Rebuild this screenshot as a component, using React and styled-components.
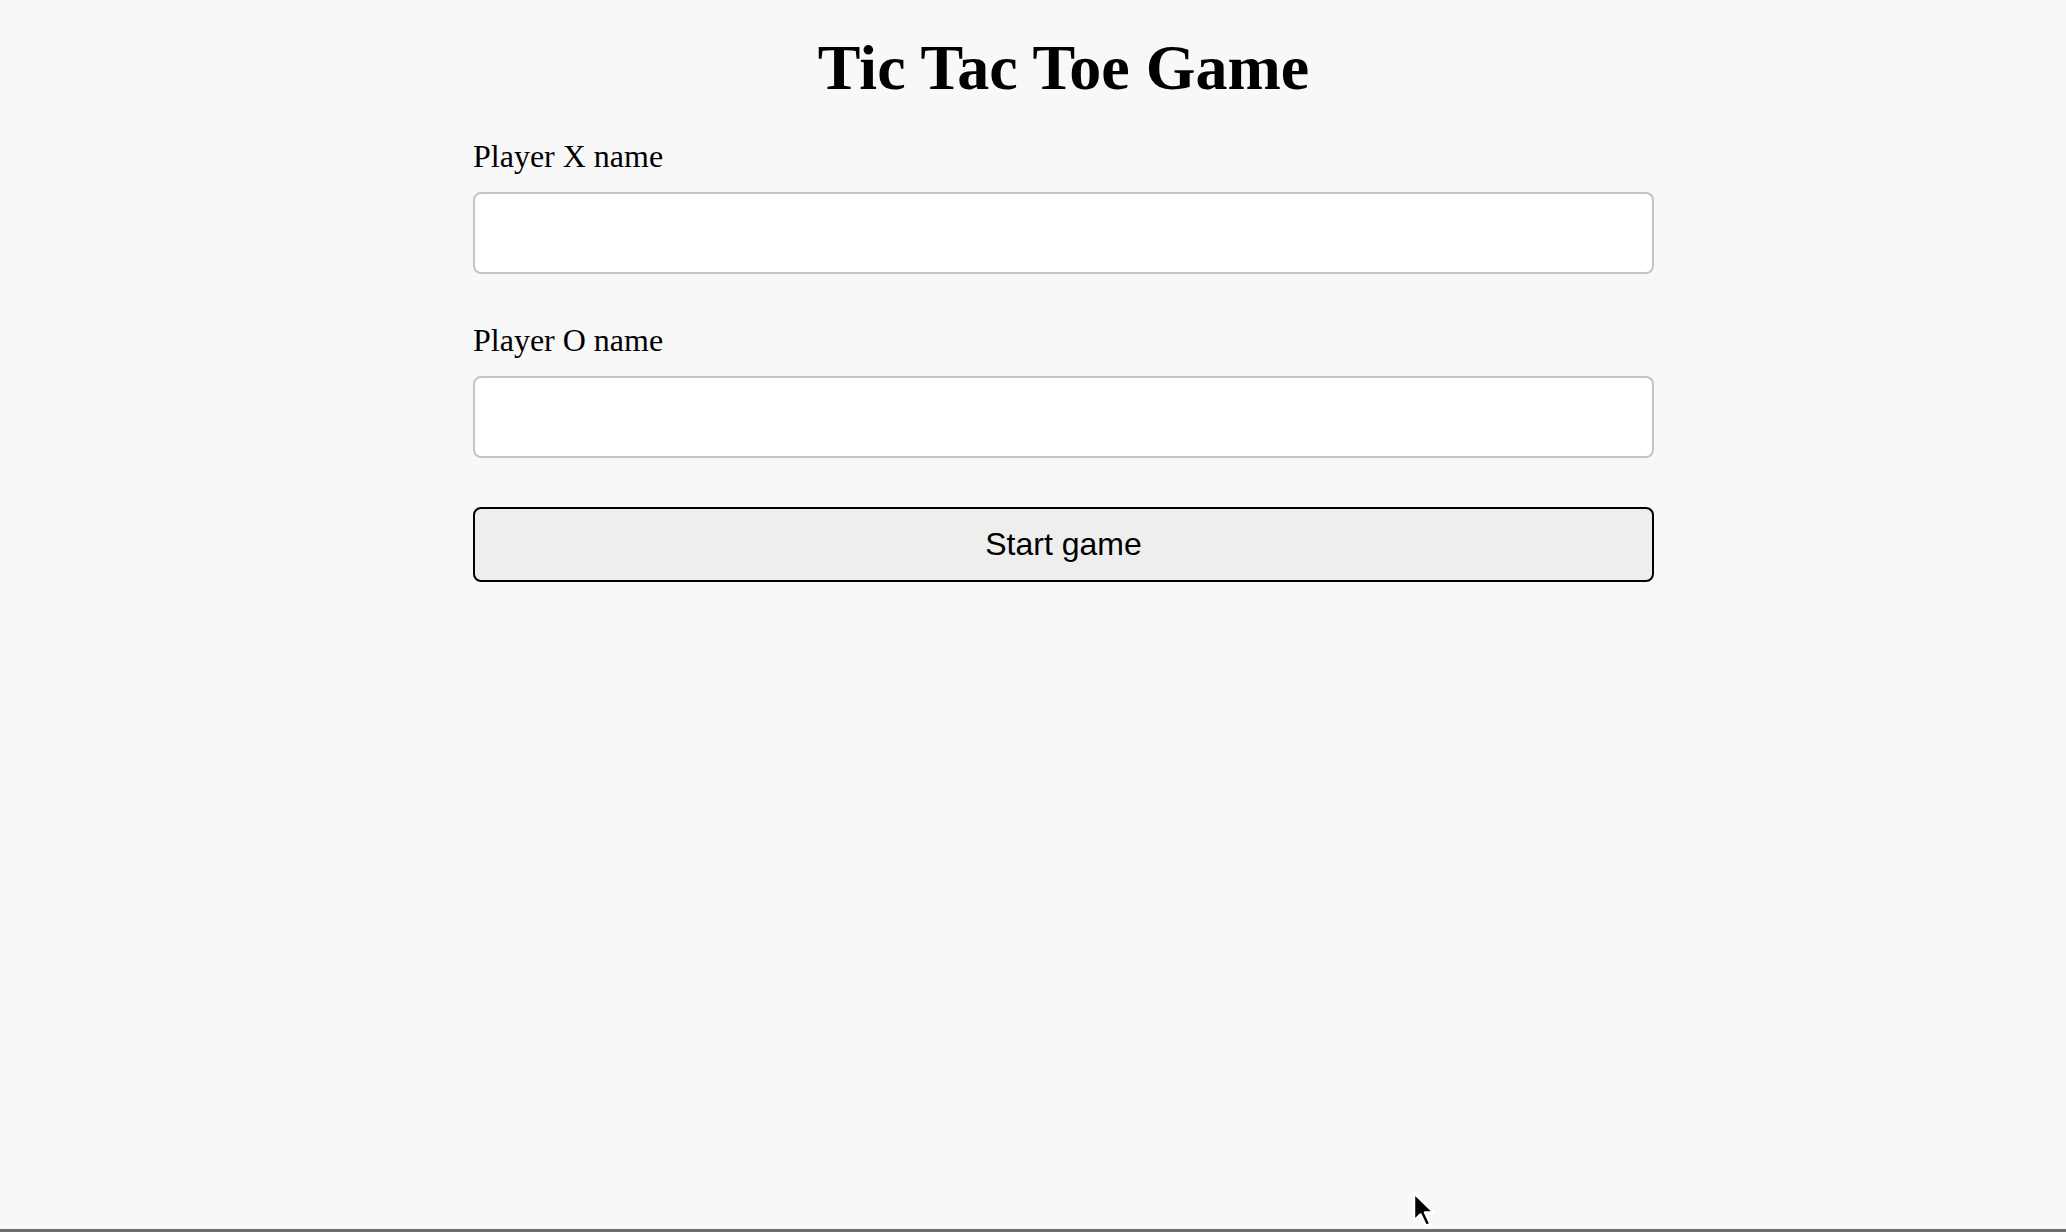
import React, { useState } from 'react';
import styled, { createGlobalStyle } from 'styled-components';

const GlobalStyle = createGlobalStyle`
  html, body {
    margin: 0;
    padding: 0;
    background: #f8f8f8;
  }
  * {
    box-sizing: border-box;
  }
`;

const Page = styled.div`
  position: relative;
  min-height: 100vh;
  padding: 31px 0 0 61px;
  background: #f8f8f8;
  border-bottom: 3px solid #6d6d6d;
  font-family: "Liberation Serif", "Times New Roman", serif;
  color: #000;
`;

const Container = styled.div`
  width: 1181px;
  margin: 0 auto;
  display: flex;
  flex-direction: column;
`;

const Title = styled.h1`
  margin: 0 0 33px;
  font-size: 64px;
  line-height: 74px;
  font-weight: bold;
  text-align: center;
`;

const Field = styled.div`
  display: flex;
  flex-direction: column;
  gap: 17px;
  margin-bottom: 48px;
`;

const Label = styled.label`
  font-size: 32px;
  line-height: 37px;
`;

const Input = styled.input`
  height: 82px;
  width: 100%;
  border: 2px solid #c4c4c4;
  border-radius: 8px;
  background: #fff;
  padding: 0 16px;
  font-size: 32px;
  font-family: "Liberation Sans", Arial, sans-serif;
  outline: none;
`;

const StartButton = styled.button`
  height: 75px;
  width: 100%;
  margin-top: 1px;
  border: 2px solid #000;
  border-radius: 8px;
  background: #eeeeee;
  font-family: "Liberation Sans", Arial, sans-serif;
  font-size: 32px;
  color: #000;
  cursor: pointer;
`;

const Cursor = styled.svg`
  position: absolute;
  left: 1410px;
  top: 1190px;
`;

const App = () => {
  const [playerX, setPlayerX] = useState('');
  const [playerO, setPlayerO] = useState('');

  return (
    <Page>
      <GlobalStyle />
      <Container>
        <Title>Tic Tac Toe Game</Title>
        <Field>
          <Label htmlFor="playerX">Player X name</Label>
          <Input id="playerX" value={playerX} onChange={(e) => setPlayerX(e.target.value)} />
        </Field>
        <Field>
          <Label htmlFor="playerO">Player O name</Label>
          <Input id="playerO" value={playerO} onChange={(e) => setPlayerO(e.target.value)} />
        </Field>
        <StartButton>Start game</StartButton>
      </Container>
      {/* mouse pointer left over the page */}
      <Cursor width="30" height="40" viewBox="0 0 30 40">
        <path d="M4 3 L4 31 L10.5 24.5 L16 36 L20.5 34 L15 22.5 L24 22.5 Z" fill="#000" stroke="#fff" strokeWidth="2.5" strokeLinejoin="round" />
      </Cursor>
    </Page>
  );
};

export default App;
